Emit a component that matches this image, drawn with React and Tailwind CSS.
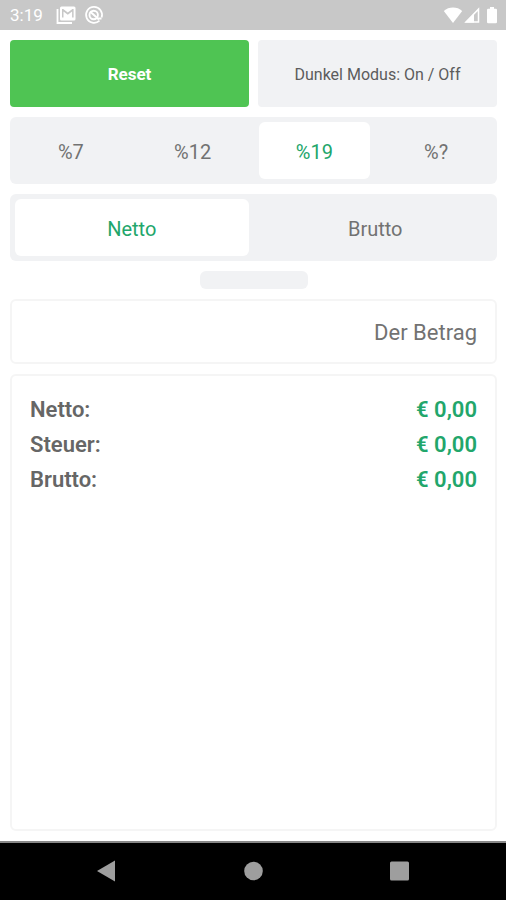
import { useState } from "react";

function StatusBar() {
  return (
    <header className="flex h-[30px] items-center bg-[#c8c8c8] pl-[10px] pr-[8px] text-white">
      <span className="w-[46px] text-[17px] leading-5">3:19</span>
      <svg className="h-5 w-5" viewBox="0 0 20 20" aria-hidden="true">
        <path d="M1.500 4v14h14.500" fill="none" stroke="currentColor" strokeWidth="1.800" />
        <path
          fill="currentColor"
          fillRule="evenodd"
          d="M5.500 1.500h12.500a1.500 1.500 0 0 1 1.500 1.500v11a1.500 1.500 0 0 1-1.500 1.500h-12.500a1.500 1.500 0 0 1-1.500-1.500v-11a1.500 1.500 0 0 1 1.500-1.500zM6 4v8.500h1.500v-6l4.300 3.300 4.300-3.300v6h1.500v-8.500h-1.200l-4.600 3.600-4.600-3.600z"
        />
      </svg>
      <svg className="ml-[8px] h-5 w-5" viewBox="0 0 20 20" fill="none" stroke="currentColor" aria-hidden="true">
        <path d="M15.500 15.700A8 8 0 1 1 17.600 12.500" strokeWidth="1.700" />
        <circle cx="9.700" cy="10" r="4.200" strokeWidth="1.900" />
        <path d="M6 6.500l9 8M13 13.500h4.500" strokeWidth="1.900" />
      </svg>
      <svg className="ml-auto h-5 w-5" viewBox="0 0 20 20" fill="currentColor" aria-hidden="true">
        <path d="M10 18L.8 6C3.400 3.500 6.500 2.400 10 2.400S16.600 3.500 19.200 6z" />
      </svg>
      <svg className="h-5 w-[18px]" viewBox="0 0 18 20" aria-hidden="true">
        <path d="M3 17L15.500 4.200V17z" fill="none" stroke="currentColor" strokeWidth="1.500" />
        <path d="M2 17.500L11 8.500V17.500z" fill="currentColor" />
      </svg>
      <svg className="ml-[5px] h-5 w-3" viewBox="0 0 12 20" fill="currentColor" aria-hidden="true">
        <path d="M4 2h4v1.800h1.800a1.200 1.200 0 0 1 1.200 1.200v12a1.200 1.200 0 0 1-1.200 1.200H2.200A1.200 1.200 0 0 1 1 17V5a1.200 1.200 0 0 1 1.200-1.200H4z" />
      </svg>
    </header>
  );
}

function Segments({ label, options, value, onChange }) {
  return (
    <div role="group" aria-label={label} className="flex h-[67px] rounded-md bg-[#f1f2f4] py-[5px]">
      {options.map((option) => (
        <div key={option} className="flex flex-1 px-[5px]">
          <button
            type="button"
            aria-pressed={option === value}
            onClick={() => onChange(option)}
            className={
              option === value
                ? "flex-1 rounded-md bg-white pt-[2px] text-xl text-[#22a66b]"
                : "flex-1 rounded-md pt-[2px] text-xl text-[#727272]"
            }
          >
            {option}
          </button>
        </div>
      ))}
    </div>
  );
}

const euro = (n) => "€ " + n.toFixed(2).replace(".", ",");

export default function App() {
  const [rate, setRate] = useState("%19");
  const [mode, setMode] = useState("Netto");
  const [amount, setAmount] = useState("");

  const value = parseFloat(amount.replace(",", ".")) || 0;
  const factor = 1 + (parseFloat(rate.slice(1)) || 0) / 100;
  const net = mode === "Netto" ? value : value / factor;
  const gross = mode === "Netto" ? value * factor : value;
  const results = [
    ["Netto:", net],
    ["Steuer:", gross - net],
    ["Brutto:", gross],
  ];

  return (
    <div className="flex min-h-screen flex-col bg-white font-[Roboto,sans-serif]">
      <StatusBar />
      <main className="flex flex-1 flex-col gap-[10px] pt-[10px] pr-[9px] pb-[10px] pl-[10px]">
        <div className="flex h-[67px] gap-[9px]">
          <button
            type="button"
            onClick={() => setAmount("")}
            className="flex-1 rounded bg-[#4fc453] pt-[2px] text-[17px] font-bold text-white"
          >
            Reset
          </button>
          <button type="button" className="flex-1 rounded bg-[#f1f2f4] pt-[2px] text-base text-[#5c5c5c]">
            Dunkel Modus: On / Off
          </button>
        </div>
        <Segments label="Steuersatz" options={["%7", "%12", "%19", "%?"]} value={rate} onChange={setRate} />
        <Segments label="Modus" options={["Netto", "Brutto"]} value={mode} onChange={setMode} />
        <div className="h-[18px] w-[108px] self-center rounded-md bg-[#f1f2f4]" />
        <input
          type="text"
          inputMode="decimal"
          aria-label="Der Betrag"
          placeholder="Der Betrag"
          value={amount}
          onChange={(e) => setAmount(e.target.value)}
          className="h-[65px] w-full rounded-md border-2 border-[#f5f5f5] px-[18px] pt-[2px] text-right text-[22px] text-[#666666] outline-none placeholder:text-[#727272] placeholder:opacity-100"
        />
        <dl className="flex-1 rounded-md border-2 border-[#f5f5f5] px-[18px] pt-4 text-[22px] leading-[35px] font-semibold">
          {results.map(([name, sum]) => (
            <div key={name} className="flex justify-between">
              <dt className="text-[#666666]">{name}</dt>
              <dd className="text-[#22a66b]">{euro(sum)}</dd>
            </div>
          ))}
        </dl>
      </main>
      <nav
        aria-label="System"
        className="flex h-[59px] items-center justify-around border-t-2 border-[#888888] bg-black px-[33px] pb-[2px] text-[#9e9e9e]"
      >
        <button type="button" aria-label="Zurück">
          <svg className="h-6 w-6" viewBox="0 0 24 24" fill="currentColor">
            <path d="M21 1.500v21L3 12z" />
          </svg>
        </button>
        <button type="button" aria-label="Startseite">
          <svg className="h-6 w-6" viewBox="0 0 24 24" fill="currentColor">
            <circle cx="12.500" cy="12" r="9.300" />
          </svg>
        </button>
        <button type="button" aria-label="Übersicht">
          <svg className="h-6 w-6" viewBox="0 0 24 24" fill="currentColor">
            <rect x="2" y="2.500" width="19" height="19" rx="1.500" />
          </svg>
        </button>
      </nav>
    </div>
  );
}
